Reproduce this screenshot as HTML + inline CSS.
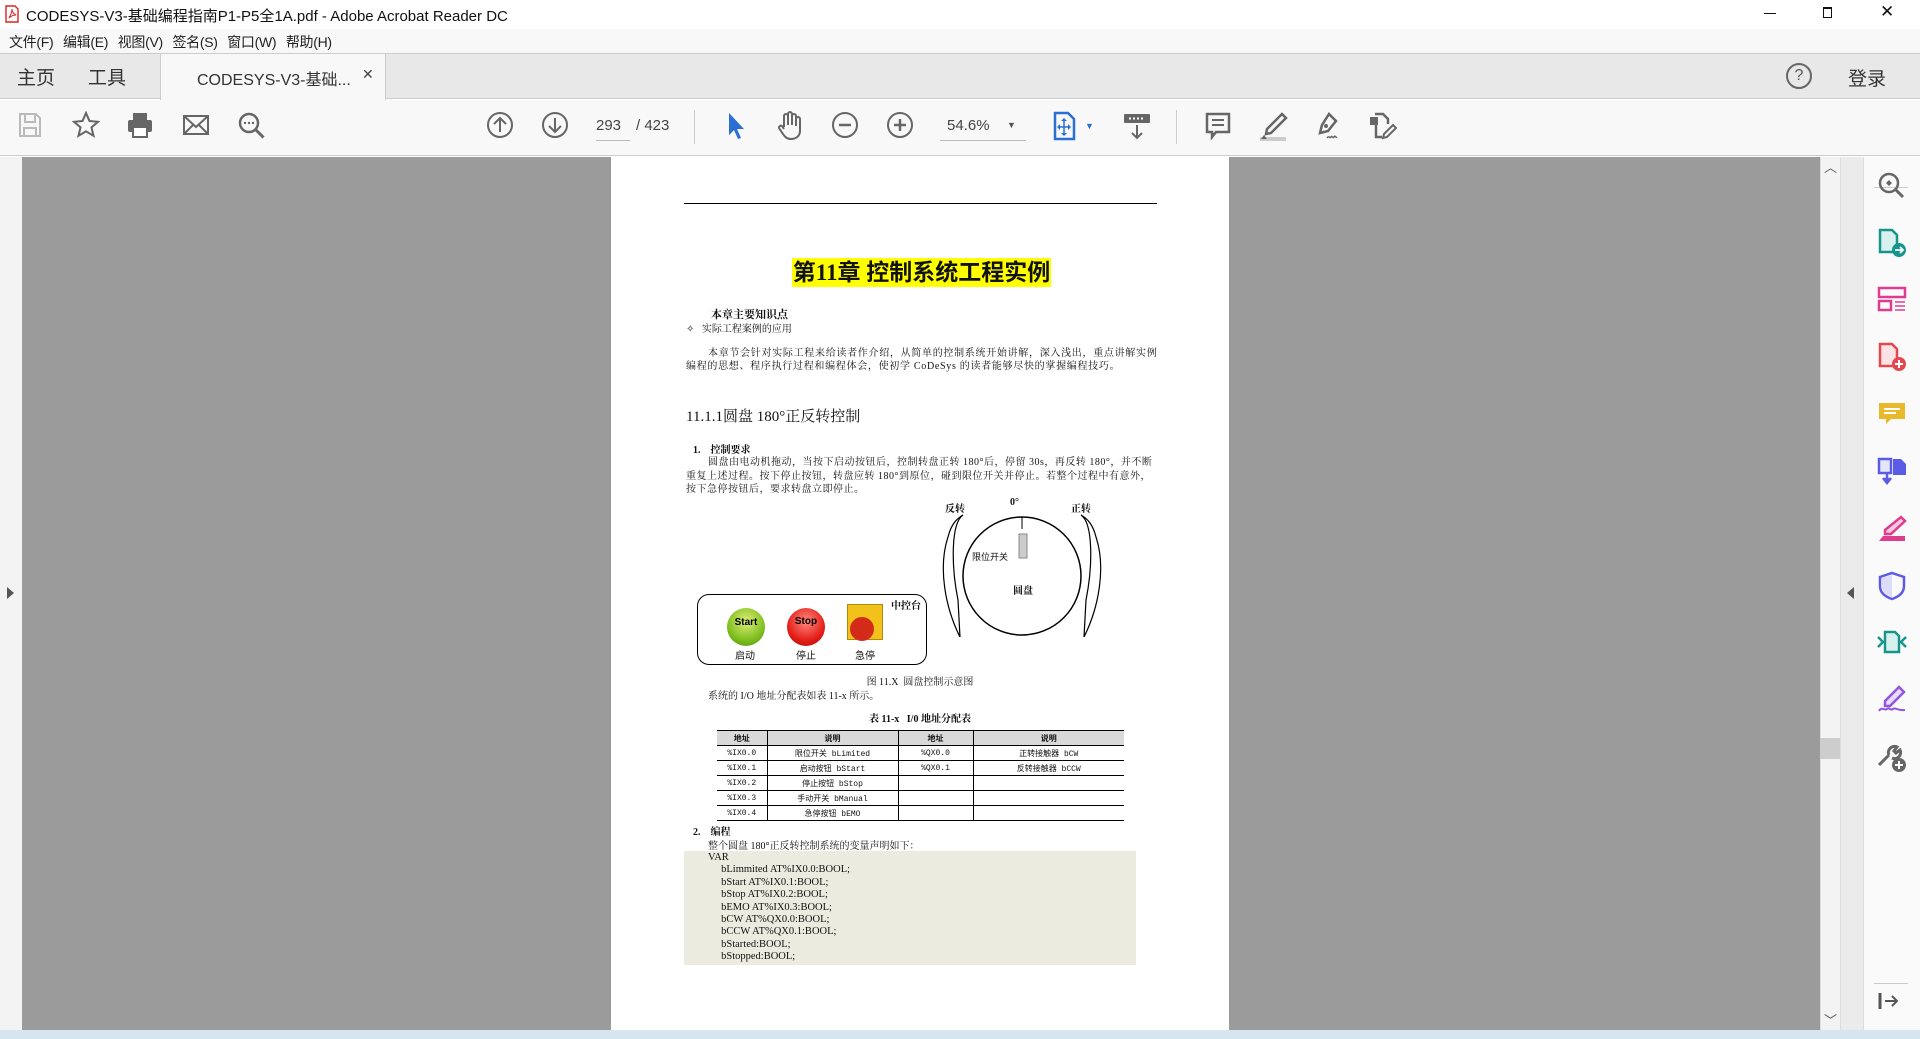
<!DOCTYPE html>
<html><head><meta charset="utf-8"><style>
*{margin:0;padding:0;box-sizing:border-box}
body{width:1920px;height:1039px;overflow:hidden;position:relative;font-family:"Liberation Sans","Noto Sans CJK SC",sans-serif;background:#fff;color:#222}
.a{position:absolute}
.pg{font-family:"Liberation Serif","Noto Serif CJK SC","Noto Sans CJK SC",serif;color:#111}
.ic{position:absolute;top:111px}
.ri{position:absolute;left:1877px}
table{border-collapse:collapse}
td{border-left:1px solid #000;border-bottom:1px solid #000;height:15px;font-size:8px;text-align:center;font-family:"Liberation Mono","Noto Sans CJK SC",monospace}
</style></head><body>
<div class="a" style="left:0;top:0;width:1920px;height:29px;background:#fff"></div>
<svg class="a" style="left:5px;top:5px" width="14" height="18"><path d="M1 1h9l3 3v13H1z" fill="#fff" stroke="#d22" stroke-width="1.4"/><path d="M4 13c2-4 3-6 3-9 0 3 2 5 4 6-3 0-5 1-7 3" fill="none" stroke="#d22"/></svg>
<div class="a" style="left:26px;top:5px;font-size:15px;color:#111">CODESYS-V3-基础编程指南P1-P5全1A.pdf - Adobe Acrobat Reader DC</div>
<div class="a" style="left:1764px;top:13px;width:12px;height:1px;background:#111"></div>
<div class="a" style="left:1823px;top:7px;width:9px;height:11px;border:1px solid #111;border-top-width:2px"></div>
<div class="a" style="left:1880px;top:2px;font-size:17px;color:#111">✕</div>
<div class="a" style="left:0;top:29px;width:1920px;height:25px;background:#f8f8f8;border-bottom:1px solid #ccc"></div>
<div class="a" style="left:9px;top:32px;font-size:14px;color:#222;word-spacing:6px;letter-spacing:-0.3px">文件(F) 编辑(E) 视图(V) 签名(S) 窗口(W) 帮助(H)</div>
<div class="a" style="left:0;top:54px;width:1920px;height:45px;background:#e8e8e8;border-bottom:1px solid #ccc"></div>
<div class="a" style="left:160px;top:54px;width:226px;height:46px;background:#f8f8f8;border-left:1px solid #ccc;border-right:1px solid #ccc"></div>
<div class="a" style="left:17px;top:63px;font-size:19px;color:#333">主页</div>
<div class="a" style="left:88px;top:63px;font-size:19px;color:#333">工具</div>
<div class="a" style="left:197px;top:66px;font-size:16px;color:#333">CODESYS-V3-基础...</div>
<div class="a" style="left:362px;top:66px;font-size:14px;color:#444">✕</div>
<div class="a" style="left:1786px;top:63px;width:26px;height:26px;border:2px solid #666;border-radius:50%;text-align:center;font-size:16px;line-height:22px;color:#555">?</div>
<div class="a" style="left:1848px;top:64px;font-size:19px;color:#333">登录</div>
<div class="a" style="left:0;top:100px;width:1920px;height:56px;background:#f8f8f8;border-bottom:1px solid #ccc"></div>
<svg class="ic" style="left:17px" width="26" height="28"><path d="M3 3h16l4 4v18H3z M8 3v8h10V3 M7 25v-8h12v8" fill="none" stroke="#bbb" stroke-width="2"/></svg>
<svg class="ic" style="left:72px" width="28" height="28"><path d="M14 2l3.5 8 8.5.8-6.5 5.6 2 8.4L14 20.3 6.5 24.8l2-8.4L2 10.8l8.5-.8z" fill="none" stroke="#666" stroke-width="2"/></svg>
<svg class="ic" style="left:126px" width="28" height="28"><rect x="7" y="2" width="14" height="7" fill="#666"/><rect x="2" y="9" width="24" height="12" rx="2" fill="#666"/><rect x="7" y="16" width="14" height="10" fill="#fff" stroke="#666" stroke-width="2"/></svg>
<svg class="ic" style="left:182px" width="28" height="28"><rect x="2" y="5" width="24" height="18" fill="none" stroke="#666" stroke-width="2"/><path d="M2 5l12 11L26 5M2 23l9-9M26 23l-9-9" fill="none" stroke="#666" stroke-width="2"/></svg>
<svg class="ic" style="left:237px" width="30" height="30"><circle cx="12" cy="12" r="9" fill="none" stroke="#666" stroke-width="2.5"/><path d="M18.5 18.5l8 8" stroke="#666" stroke-width="3"/><circle cx="8" cy="12" r="1.2" fill="#666"/><circle cx="12" cy="12" r="1.2" fill="#666"/><circle cx="16" cy="12" r="1.2" fill="#666"/></svg>
<svg class="ic" style="left:486px" width="28" height="28"><circle cx="14" cy="14" r="12" fill="none" stroke="#666" stroke-width="2"/><path d="M14 21V7M8 13l6-6 6 6" fill="none" stroke="#666" stroke-width="2"/></svg>
<svg class="ic" style="left:541px" width="28" height="28"><circle cx="14" cy="14" r="12" fill="none" stroke="#666" stroke-width="2"/><path d="M14 7v14M8 15l6 6 6-6" fill="none" stroke="#666" stroke-width="2"/></svg>
<div class="a" style="left:596px;top:117px;width:34px;font-size:15px;color:#444;border-bottom:1px solid #bbb;padding-bottom:6px">293</div>
<div class="a" style="left:636px;top:117px;font-size:15px;color:#444">/ 423</div>
<div class="a" style="left:694px;top:110px;width:1px;height:34px;background:#ccc"></div>
<svg class="ic" style="left:726px" width="20" height="30"><path d="M3 2v22l5-5 4 9 3-1-4-9h7z" fill="#2a6fd1"/></svg>
<svg class="ic" style="left:776px" width="28" height="30"><path d="M8 16V5a2 2 0 0 1 4 0v9V3a2 2 0 0 1 4 0v11V5a2 2 0 0 1 4 0v10-7a2 2 0 0 1 4 0v12c0 5-4 8-9 8-4 0-6-2-8-5l-4-6a2 2 0 0 1 3-2l2 3" fill="none" stroke="#666" stroke-width="2"/></svg>
<svg class="ic" style="left:831px" width="28" height="28"><circle cx="14" cy="14" r="12" fill="none" stroke="#666" stroke-width="2"/><path d="M8 14h12" stroke="#666" stroke-width="2.5"/></svg>
<svg class="ic" style="left:886px" width="28" height="28"><circle cx="14" cy="14" r="12" fill="none" stroke="#666" stroke-width="2"/><path d="M8 14h12M14 8v12" stroke="#666" stroke-width="2.5"/></svg>
<div class="a" style="left:940px;top:117px;width:86px;font-size:15px;color:#444;border-bottom:1px solid #bbb;padding-bottom:6px;padding-left:7px">54.6%</div>
<div class="a" style="left:1007px;top:120px;font-size:9px;color:#555">▼</div>
<svg class="ic" style="left:1053px" width="24" height="30"><path d="M2 2h13l6 6v20H2z" fill="none" stroke="#2a6fd1" stroke-width="2.5"/><path d="M11 8v16M5 16h12" stroke="#2a6fd1" stroke-width="1.5"/><path d="M11 7l-3 3h6zM11 25l-3-3h6zM4 16l3-3v6zM18 16l-3-3v6z" fill="#2a6fd1"/></svg>
<div class="a" style="left:1085px;top:121px;font-size:9px;color:#2a6fd1">▼</div>
<svg class="ic" style="left:1122px" width="30" height="30"><rect x="2" y="3" width="26" height="9" rx="1" fill="#666"/><path d="M7 7.5h16" stroke="#fff" stroke-width="2" stroke-dasharray="2 2"/><path d="M15 14v13M10 22l5 5 5-5" fill="none" stroke="#666" stroke-width="2"/></svg>
<div class="a" style="left:1176px;top:110px;width:1px;height:34px;background:#ccc"></div>
<svg class="ic" style="left:1204px" width="28" height="30"><path d="M3 3h22v18H12l-4 5v-5H3z" fill="none" stroke="#666" stroke-width="2.5"/><path d="M8 9h12M8 14h12" stroke="#666" stroke-width="2"/></svg>
<svg class="ic" style="left:1258px" width="30" height="30"><path d="M24 3l4 4-15 15-5 1 1-5z" fill="none" stroke="#666" stroke-width="2.5"/><path d="M2 28h26" stroke="#ccc" stroke-width="4"/><path d="M6 24l-3 4h6z" fill="#666"/></svg>
<svg class="ic" style="left:1312px" width="30" height="30"><path d="M17 3l7 7-8 10-8 2 2-8z" fill="none" stroke="#666" stroke-width="2.5"/><circle cx="14" cy="15" r="2" fill="#666"/><path d="M15 27c2-3 3 1 4-1s2 2 3 0 2 1 3 0" fill="none" stroke="#666" stroke-width="1.5"/></svg>
<svg class="ic" style="left:1367px" width="30" height="30"><path d="M3 6h8v8H3z" fill="#666"/><path d="M8 3h8l5 5v5M9 14v12h6" fill="none" stroke="#666" stroke-width="2.5"/><path d="M26 14l3 3-9 9-4 1 1-4z" fill="none" stroke="#666" stroke-width="2"/></svg>
<div class="a" style="left:0;top:157px;width:22px;height:873px;background:#f3f3f3"></div>
<div class="a" style="left:7px;top:587px;width:0;height:0;border-top:6px solid transparent;border-bottom:6px solid transparent;border-left:7px solid #555"></div>
<div class="a" style="left:22px;top:157px;width:1798px;height:873px;background:#9b9b9b"></div>
<div class="a" style="left:1820px;top:157px;width:20px;height:873px;background:#f3f3f3;border-left:1px solid #ddd"></div>
<div class="a" style="left:1824px;top:157px;font-size:13px;color:#555">︿</div>
<div class="a" style="left:1824px;top:1010px;font-size:13px;color:#555">﹀</div>
<div class="a" style="left:1820px;top:738px;width:20px;height:21px;background:#cdcdcd"></div>
<div class="a" style="left:1840px;top:157px;width:24px;height:873px;background:#ebebeb;border-left:1px solid #ddd;border-right:1px solid #ddd"></div>
<div class="a" style="left:1847px;top:587px;width:0;height:0;border-top:6px solid transparent;border-bottom:6px solid transparent;border-right:7px solid #555"></div>
<div class="a" style="left:1864px;top:157px;width:56px;height:873px;background:#fafafa"></div>
<div class="a" style="left:0;top:1030px;width:1920px;height:9px;background:#d5e6ee"></div>
<div class="a" style="left:1874px;top:187px;width:34px;height:1px;background:#ccc"></div>
<div class="a" style="left:1874px;top:983px;width:34px;height:1px;background:#ccc"></div>
<svg class="ri" style="top:171px" width="28" height="28"><circle cx="12" cy="12" r="9" fill="none" stroke="#666" stroke-width="2.5"/><path d="M18 18l8 8" stroke="#666" stroke-width="3"/><path d="M9 12l3-3v6zM15 12l-3-3v6z" fill="#666"/></svg>
<svg class="ri" style="top:228px" width="30" height="30"><path d="M3 2h12l5 5v17H3z" fill="#d8f0ee" stroke="#17958d" stroke-width="2.5"/><circle cx="22" cy="22" r="7" fill="#17958d"/><path d="M18 22h7M23 19l3 3-3 3" fill="none" stroke="#fff" stroke-width="1.8"/></svg>
<svg class="ri" style="top:286px" width="30" height="28"><rect x="2" y="2" width="26" height="9" fill="none" stroke="#e03c8f" stroke-width="2.5"/><rect x="2" y="15" width="12" height="9" fill="none" stroke="#e03c8f" stroke-width="2.5"/><path d="M18 16h10M18 20h10M18 24h10" stroke="#e03c8f" stroke-width="1.5"/></svg>
<svg class="ri" style="top:342px" width="30" height="30"><path d="M3 2h12l5 5v17H3z" fill="#fbe3e3" stroke="#e34850" stroke-width="2.5"/><circle cx="22" cy="22" r="7" fill="#e34850"/><path d="M18 22h8M22 18v8" stroke="#fff" stroke-width="2"/></svg>
<svg class="ri" style="top:401px" width="30" height="28"><path d="M2 2h26v16H14l-5 5v-5H2z" fill="#e8b92a"/><path d="M7 8h16M7 12h12" stroke="#fff" stroke-width="2"/></svg>
<svg class="ri" style="top:456px" width="30" height="30"><path d="M2 3h12v14H2z" fill="#e6e6fb" stroke="#5b5be6" stroke-width="2.5"/><path d="M16 3h8l5 5v11H16z" fill="#5b5be6"/><path d="M10 18v7M6 22l4 5 4-5" fill="#5b5be6" stroke="#5b5be6" stroke-width="2.5"/></svg>
<svg class="ri" style="top:515px" width="30" height="28"><path d="M24 2l4 4-14 13-6 0 0-4z" fill="#f6c9df" stroke="#e03c8f" stroke-width="2.5"/><path d="M2 26l4-5h22v5z" fill="#e03c8f"/></svg>
<svg class="ri" style="top:571px" width="30" height="30"><path d="M15 2l12 4v9c0 7-6 11-12 13C9 26 3 22 3 15V6z" fill="none" stroke="#5b5be6" stroke-width="2.5"/><path d="M15 4v22C10 24 5 21 5 15V7z" fill="#dcdcf8"/></svg>
<svg class="ri" style="top:628px" width="30" height="30"><path d="M8 4h10l4 4v16H8z" fill="#d8f0ee" stroke="#17958d" stroke-width="2.5"/><path d="M1 9l5 5-5 5M29 9l-5 5 5 5" fill="none" stroke="#17958d" stroke-width="2.5"/></svg>
<svg class="ri" style="top:685px" width="30" height="30"><path d="M22 2l5 5-14 14H8v-5z" fill="#e8dcfa" stroke="#9155e0" stroke-width="2.5"/><path d="M2 26c3-5 5 0 8-2s3 2 6 0 4 2 12 1" fill="none" stroke="#9155e0" stroke-width="2"/></svg>
<svg class="ri" style="top:743px" width="30" height="30"><path d="M2 22l10-10M12 12a6 6 0 0 1 8-8l-3 4 2 2 4-3a6 6 0 0 1-8 8" fill="none" stroke="#666" stroke-width="3"/><circle cx="22" cy="22" r="7" fill="#666"/><path d="M18 22h8M22 18v8" stroke="#fff" stroke-width="2"/></svg>
<svg class="ri" style="top:990px" width="24" height="22"><path d="M3 3v16" stroke="#555" stroke-width="3"/><path d="M8 11h12M15 6l5 5-5 5" fill="none" stroke="#555" stroke-width="2"/></svg>
<div class="a pg" style="left:611px;top:157px;width:618px;height:873px;background:#fff">
<div class="a" style="left:73px;top:46px;width:473px;height:1px;background:#000"></div>
<div class="a" style="left:181px;top:101px;width:259px;height:29px;background:#ffff00"></div>
<div class="a" style="left:181px;top:101px;width:259px;font-size:23px;font-weight:bold;text-align:center;line-height:29px;font-family:'Liberation Serif','Noto Sans CJK SC',serif">第11章 控制系统工程实例</div>
<div class="a" style="left:100px;top:149px;font-size:11px;font-weight:bold">本章主要知识点</div>
<div class="a" style="left:75px;top:163px;font-size:10px">✧&nbsp;&nbsp;&nbsp;实际工程案例的应用</div>
<div class="a" style="left:75px;top:190px;width:475px;font-size:10px;line-height:13px;text-indent:22px;letter-spacing:0.7px">本章节会针对实际工程来给读者作介绍，从简单的控制系统开始讲解，深入浅出，重点讲解实例编程的思想、程序执行过程和编程体会，使初学 CoDeSys 的读者能够尽快的掌握编程技巧。</div>
<div class="a" style="left:75px;top:248px;font-size:15px">11.1.1圆盘 180°正反转控制</div>
<div class="a" style="left:82px;top:284px;font-size:10px;font-weight:bold">1.&nbsp;&nbsp;&nbsp;&nbsp;控制要求</div>
<div class="a" style="left:75px;top:299px;width:475px;font-size:10px;line-height:13.5px;text-indent:22px;letter-spacing:0.5px">圆盘由电动机拖动，当按下启动按钮后，控制转盘正转 180°后，停留 30s，再反转 180°，并不断重复上述过程。按下停止按钮，转盘应转 180°到原位，碰到限位开关并停止。若整个过程中有意外，按下急停按钮后，要求转盘立即停止。</div>
<div class="a" style="left:334px;top:343px;font-size:10px;font-weight:bold">反转</div>
<div class="a" style="left:399px;top:340px;font-size:10px;font-weight:bold">0°</div>
<div class="a" style="left:460px;top:343px;font-size:10px;font-weight:bold">正转</div>
<svg class="a" style="left:330px;top:355px" width="170" height="125"><circle cx="81" cy="64" r="59" fill="none" stroke="#000" stroke-width="1.5"/><path d="M81 5v12" stroke="#000"/><path d="M22 3c-12 8-12 50 -5 85l2 37c-15-30-22-70-12-100 3-12 8-18 15-22z" fill="none" stroke="#000" stroke-width="1.2"/><path d="M140 3c12 8 12 50 5 85l-2 37c15-30 22-70 12-100-3-12-8-18-15-22z" fill="none" stroke="#000" stroke-width="1.2"/><rect x="78" y="22" width="8" height="24" fill="#ccc" stroke="#888"/></svg>
<div class="a" style="left:361px;top:393px;font-size:9px;font-family:'Liberation Sans','Noto Sans CJK SC',sans-serif">限位开关</div>
<div class="a" style="left:402px;top:425px;font-size:10px;font-weight:bold">圆盘</div>
<div class="a" style="left:86px;top:437px;width:230px;height:71px;border:1.5px solid #000;border-radius:12px"></div>
<div class="a" style="left:280px;top:440px;font-size:10px;font-weight:bold">中控台</div>
<div class="a" style="left:116px;top:451px;width:38px;height:38px;border-radius:50%;background:radial-gradient(circle at 50% 35%,#dff07a,#7fbf1f 60%,#4f8f10);text-align:center;font:bold 10px/30px 'Liberation Sans',sans-serif;color:#000">Start</div>
<div class="a" style="left:176px;top:451px;width:38px;height:38px;border-radius:50%;background:radial-gradient(circle at 50% 35%,#ff8a80,#e5201a 60%,#a00);text-align:center;font:bold 10px/28px 'Liberation Sans',sans-serif;color:#000">Stop</div>
<div class="a" style="left:236px;top:447px;width:36px;height:36px;background:#f2c21a;border:1px solid #b08a10"></div>
<div class="a" style="left:239px;top:460px;width:24px;height:24px;border-radius:50%;background:#d42a1a"></div>
<div class="a" style="left:124px;top:490px;font-size:10px;font-family:'Liberation Sans','Noto Sans CJK SC',sans-serif">启动</div>
<div class="a" style="left:185px;top:490px;font-size:10px;font-family:'Liberation Sans','Noto Sans CJK SC',sans-serif">停止</div>
<div class="a" style="left:244px;top:490px;font-size:10px;font-family:'Liberation Sans','Noto Sans CJK SC',sans-serif">急停</div>
<div class="a" style="left:0;top:516px;width:618px;text-align:center;font-size:10px;padding-left:0">图 11.X&nbsp; 圆盘控制示意图</div>
<div class="a" style="left:97px;top:530px;font-size:10px">系统的 I/O 地址分配表如表 11-x 所示。</div>
<div class="a" style="left:0;top:553px;width:618px;text-align:center;font-size:10px;font-weight:bold;padding-left:0">表 11-x&nbsp;&nbsp;&nbsp;I/0 地址分配表</div>
<table class="a" style="left:106px;top:573px;border-top:1.5px solid #000">
<tr style="background:#d9d9d9;font-weight:bold"><td style="width:50px;border-left:0">地址</td><td style="width:131px">说明</td><td style="width:75px">地址</td><td style="width:151px">说明</td></tr>
<tr><td style="border-left:0">%IX0.0</td><td>限位开关 bLimited</td><td>%QX0.0</td><td>正转接触器 bCW</td></tr>
<tr><td style="border-left:0">%IX0.1</td><td>启动按钮 bStart</td><td>%QX0.1</td><td>反转接触器 bCCW</td></tr>
<tr><td style="border-left:0">%IX0.2</td><td>停止按钮 bStop</td><td></td><td></td></tr>
<tr><td style="border-left:0">%IX0.3</td><td>手动开关 bManual</td><td></td><td></td></tr>
<tr><td style="border-left:0">%IX0.4</td><td>急停按钮 bEMO</td><td></td><td></td></tr>
</table>
<div class="a" style="left:82px;top:666px;font-size:10px;font-weight:bold">2.&nbsp;&nbsp;&nbsp;&nbsp;编程</div>
<div class="a" style="left:97px;top:680px;font-size:10px">整个圆盘 180°正反转控制系统的变量声明如下：</div>
<div class="a" style="left:73px;top:694px;width:452px;height:114px;background:#ecebe0"></div>
<div class="a" style="left:97px;top:695px;font-size:10.5px;line-height:12.4px">VAR<br>&nbsp;&nbsp;&nbsp;&nbsp;&nbsp;bLimmited AT%IX0.0:BOOL;<br>&nbsp;&nbsp;&nbsp;&nbsp;&nbsp;bStart AT%IX0.1:BOOL;<br>&nbsp;&nbsp;&nbsp;&nbsp;&nbsp;bStop AT%IX0.2:BOOL;<br>&nbsp;&nbsp;&nbsp;&nbsp;&nbsp;bEMO AT%IX0.3:BOOL;<br>&nbsp;&nbsp;&nbsp;&nbsp;&nbsp;bCW AT%QX0.0:BOOL;<br>&nbsp;&nbsp;&nbsp;&nbsp;&nbsp;bCCW AT%QX0.1:BOOL;<br>&nbsp;&nbsp;&nbsp;&nbsp;&nbsp;bStarted:BOOL;<br>&nbsp;&nbsp;&nbsp;&nbsp;&nbsp;bStopped:BOOL;</div>
</div>
</body></html>
